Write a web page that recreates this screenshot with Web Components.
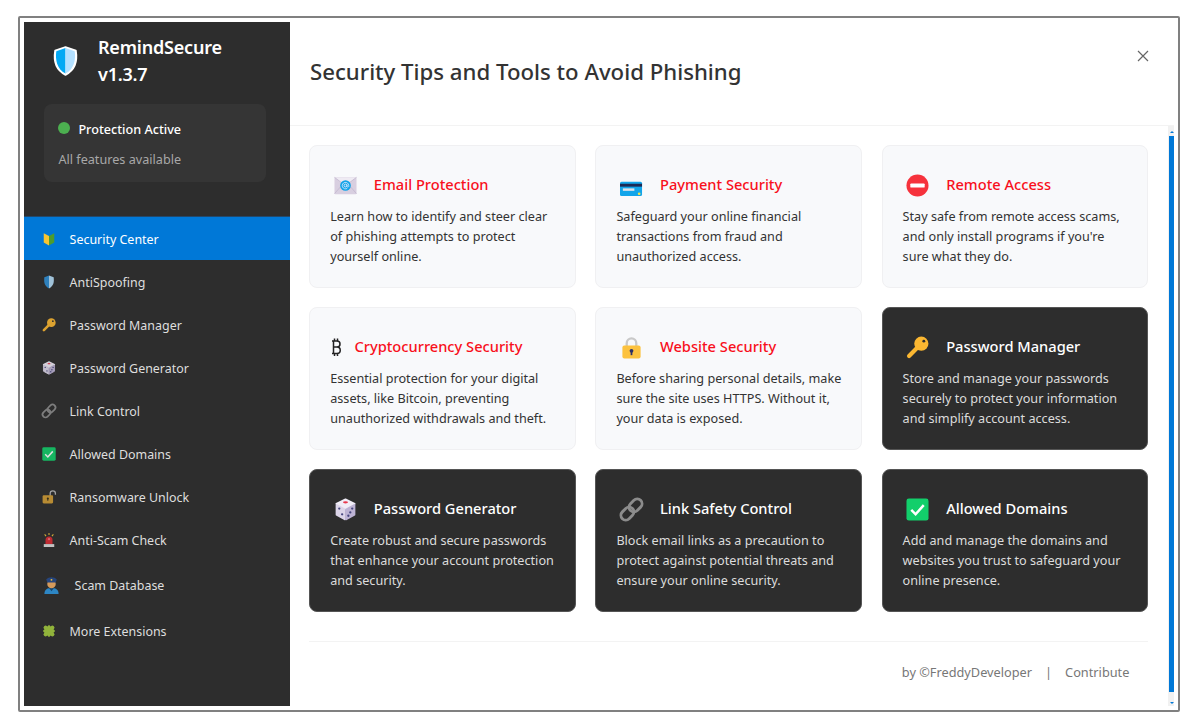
<!DOCTYPE html>
<html lang="en">
<head>
<meta charset="utf-8">
<title>RemindSecure</title>
<style>
  html, body { margin: 0; background: #fff; }
  body { font-family: "Noto Sans", "Open Sans", sans-serif; font-size: 12.65px; color: #333; }
</style>
</head>
<body>
<app-frame>
  <side-bar slot="side">
    <nav-item icon="beginner" active>Security Center</nav-item>
    <nav-item icon="shield">AntiSpoofing</nav-item>
    <nav-item icon="key">Password Manager</nav-item>
    <nav-item icon="dice">Password Generator</nav-item>
    <nav-item icon="link">Link Control</nav-item>
    <nav-item icon="check">Allowed Domains</nav-item>
    <nav-item icon="unlock">Ransomware Unlock</nav-item>
    <nav-item icon="siren">Anti-Scam Check</nav-item>
    <nav-item icon="police" tall>Scam Database</nav-item>
    <nav-item icon="puzzle" short>More Extensions</nav-item>
  </side-bar>
  <main-panel slot="main" heading="Security Tips and Tools to Avoid Phishing">
    <tip-card icon="mail" heading="Email Protection">Learn how to identify and steer clear of phishing attempts to protect yourself online.</tip-card>
    <tip-card icon="card" heading="Payment Security">Safeguard your online financial transactions from fraud and unauthorized access.</tip-card>
    <tip-card icon="noentry" heading="Remote Access">Stay safe from remote access scams, and only install programs if you're sure what they do.</tip-card>
    <tip-card icon="bitcoin" narrow heading="Cryptocurrency Security">Essential protection for your digital assets, like Bitcoin, preventing unauthorized withdrawals and theft.</tip-card>
    <tip-card icon="lock" heading="Website Security">Before sharing personal details, make sure the site uses HTTPS. Without it, your data is exposed.</tip-card>
    <tip-card icon="key" dark heading="Password Manager">Store and manage your passwords securely to protect your information and simplify account access.</tip-card>
    <tip-card icon="dice" dark heading="Password Generator">Create robust and secure passwords that enhance your account protection and security.</tip-card>
    <tip-card icon="link" dark heading="Link Safety Control">Block email links as a precaution to protect against potential threats and ensure your online security.</tip-card>
    <tip-card icon="check" dark heading="Allowed Domains">Add and manage the domains and websites you trust to safeguard your online presence.</tip-card>
  </main-panel>
</app-frame>

<script>
const ICONS = {
  logo: `<path d="M12 1 L22.4 4.5 C24 14 22 24 12 29 C2 24 0 14 1.6 4.5 Z" fill="#fff" stroke="#fff" stroke-width="1.6" stroke-linejoin="round"/>
    <path d="M12 2 L2.8 5.2 C1.6 14 3.4 23 12 27.6 Z" fill="#03a9f4"/>
    <path d="M12 2 L21.2 5.2 C22.4 14 20.6 23 12 27.6 Z" fill="#b3e0ff"/>`,
  beginner: `<path d="M3 2 L12 7 V23 L3 18 Z" fill="#f7c531"/><path d="M21 2 L12 7 V23 L21 18 Z" fill="#4d9c2c"/>`,
  shield: `<path d="M12 1 L4 4 C3 12 4 19 12 23 Z" fill="#2f8fd6"/><path d="M12 1 L20 4 C21 12 20 19 12 23 Z" fill="#b5dcf7"/>`,
  key: `<path d="M13 11 L3.2 20.8" stroke="#fbb731" stroke-width="4.4" stroke-linecap="round"/>
    <circle cx="16" cy="8" r="7.4" fill="#fbb731"/><circle cx="18.6" cy="5.4" r="1.5" fill="#2d2d2d"/>`,
  dice: `<path d="M12 1.5 L21.5 6 L12 11 L2.5 6 Z" fill="#f1edf7" stroke="#f1edf7" stroke-width="2" stroke-linejoin="round"/>
    <path d="M2.5 7 L11.5 12 V22.5 L2.5 17.5 Z" fill="#dcd5e8" stroke="#dcd5e8" stroke-width="1.6" stroke-linejoin="round"/>
    <path d="M21.5 7 L12.5 12 V22.5 L21.5 17.5 Z" fill="#bdb3d4" stroke="#bdb3d4" stroke-width="1.6" stroke-linejoin="round"/>
    <ellipse cx="12" cy="4.5" rx="2.6" ry="1.2" fill="#e8394d"/>
    <g fill="#46467e"><circle cx="5.5" cy="11" r="1.2"/><circle cx="8.5" cy="17" r="1.2"/><circle cx="15" cy="18.5" r="1.2"/><circle cx="17" cy="15" r="1.2"/><circle cx="19" cy="11" r="1.2"/></g>`,
  link: `<g transform="rotate(-45 12 12)" fill="none" stroke="#8c8c8c" stroke-width="3"><rect x="-1.5" y="7" width="15" height="10" rx="5"/><rect x="10.5" y="7" width="15" height="10" rx="5"/></g>`,
  check: `<rect x="0.5" y="0.5" width="23" height="23" rx="2.5" fill="#12cf6b"/><path d="M5.5 12.5 L10 17 L18.5 7.5" fill="none" stroke="#fff" stroke-width="2.6"/>`,
  unlock: `<path d="M14 12 V6 A4.5 4.5 0 0 1 23 6 V8" fill="none" stroke="#b9b9b9" stroke-width="2.2"/>
    <rect x="1" y="9" width="18" height="14" rx="2" fill="#d09c35"/><circle cx="10" cy="14.5" r="1.8" fill="#332c18"/><rect x="9.2" y="14.5" width="1.6" height="4" fill="#332c18"/>`,
  siren: `<path d="M6 19 V12 A6 6 0 0 1 18 12 V19 Z" fill="#d92b33"/><circle cx="12" cy="10.5" r="2" fill="#f5727a"/>
    <path d="M3 19 H21 V24 H3 Z" fill="#dcdcdc"/>
    <path d="M12 0 V3.5 M4.5 2.5 L7 5.5 M19.5 2.5 L17 5.5" stroke="#f2c53d" stroke-width="1.8"/>`,
  police: `<path d="M2 24 C2 17 6.5 15.5 12 15.5 C17.5 15.5 22 17 22 24 Z" fill="#2d86c4"/>
    <path d="M8.5 15.5 L12 20 L15.5 15.5 Z" fill="#16456e"/>
    <circle cx="12" cy="9.8" r="6" fill="#d49a5c"/>
    <path d="M4.5 3.5 C8 -0.5 16 -0.5 19.5 3.5 L17.8 7.6 H6.2 Z" fill="#26457c"/><circle cx="12" cy="4" r="1.3" fill="#f2c53d"/>`,
  puzzle: `<g transform="rotate(45 12 12)" fill="#a3cb3e">
      <rect x="4.5" y="4.5" width="15" height="15" rx="1"/>
      <circle cx="12" cy="3.8" r="3.6"/><circle cx="20.2" cy="12" r="3.6"/>
      <circle cx="3.8" cy="12" r="3.6"/><circle cx="12" cy="20.2" r="3.6"/>
    </g>`,
  mail: `<rect x="0.5" y="3" width="23" height="18" rx="1" fill="#d8cfe0"/>
    <path d="M0.5 3.5 L12 12 L23.5 3.5" fill="#efebf3" stroke="#bfb3cb" stroke-width="0.7"/>
    <path d="M0.5 20.5 L8 12 M23.5 20.5 L16 12" stroke="#bfb3cb" stroke-width="0.7"/>
    <circle cx="12" cy="12" r="5.6" fill="#11a4e8"/>
    <circle cx="12" cy="12" r="1.5" fill="none" stroke="#eef" stroke-width="0.9"/>
    <path d="M13.5 11 V13 A1 1 0 0 0 15.4 12 A3.4 3.4 0 1 0 13.8 15" fill="none" stroke="#eef" stroke-width="0.8"/>`,
  card: `<rect x="0" y="8" width="23" height="15" rx="1.6" fill="#12a5ea"/>
    <rect x="0" y="10.2" width="23" height="3" fill="#1c2a55"/>
    <rect x="3" y="15" width="12" height="2.6" fill="#dde3ea"/>
    <circle cx="20" cy="20.6" r="1.4" fill="#f7e54a"/>`,
  noentry: `<circle cx="12" cy="12" r="11.5" fill="#f6323c"/><rect x="4.5" y="9.8" width="15" height="4.4" rx="1" fill="#fff"/>`,
  lock: `<path d="M7 12 V7.5 A5 5 0 0 1 17 7.5 V12" fill="none" stroke="#c9c9c9" stroke-width="2.4"/>
    <rect x="2.5" y="10" width="19" height="13.5" rx="2" fill="#fcc23f"/>
    <circle cx="12" cy="15.5" r="2" fill="#2d2f66"/><rect x="11.1" y="15.5" width="1.8" height="4.5" fill="#2d2f66"/>`
}

class AppFrame extends HTMLElement {
  constructor () {
    super()
    this.shadow = this.attachShadow({ mode: 'open' })
  }

  connectedCallback () {
    this.shadow.innerHTML = /* html */`
      <style>
        :host {
          display: flex;
          box-sizing: border-box;
          width: 1162px;
          height: 696px;
          margin: 16px 0 0 18px;
          padding: 4px;
          border: 2px solid #808080;
          border-radius: 2px;
          background: #fff;
        }
        ::slotted([slot="side"]) { flex: none; width: 266px; }
        ::slotted([slot="main"]) { flex: 1; min-width: 0; }
      </style>
      <slot name="side"></slot>
      <slot name="main"></slot>
    `
  }
}

class AppIcon extends HTMLElement {
  constructor () {
    super()
    this.shadow = this.attachShadow({ mode: 'open' })
  }

  connectedCallback () {
    const name = this.getAttribute('name')
    const box = name === 'logo' ? '0 0 24 30' : '0 0 24 24'
    this.shadow.innerHTML = /* html */`
      <style>
        :host { display: block; line-height: 0; }
        svg { display: block; width: 100%; height: 100%; overflow: visible; }
      </style>
      <svg viewBox="${box}" xmlns="http://www.w3.org/2000/svg">${ICONS[name] || ''}</svg>
    `
  }
}

class SideBar extends HTMLElement {
  constructor () {
    super()
    this.shadow = this.attachShadow({ mode: 'open' })
  }

  connectedCallback () {
    this.shadow.innerHTML = /* html */`
      <style>
        :host { display: flex; flex-direction: column; background: #2d2d2d; color: #fff; }
        .brand { display: flex; align-items: center; gap: 20px; padding: 12px 0 0 29px; }
        app-icon { width: 25px; height: 30px; }
        h1 { margin: 0; font-size: 18px; line-height: 27px; font-weight: 600; letter-spacing: -0.2px; }
        .status {
          box-sizing: border-box;
          height: 78px;
          margin: 16px 24px 34px 20px;
          padding: 15px 14.4px 13px;
          border-radius: 8px;
          background: #353535;
        }
        .state { display: flex; align-items: center; gap: 8px; line-height: 20px; font-weight: 500; margin-bottom: 10px; }
        .dot { width: 12px; height: 12px; border-radius: 50%; background: #4caf50; position: relative; top: -1px; }
        .note { line-height: 20px; color: #a8a8a8; }
        nav { display: flex; flex-direction: column; border-top: 1px solid #23486b; }
      </style>
      <div class="brand">
        <app-icon name="logo"></app-icon>
        <h1>RemindSecure<br>v1.3.7</h1>
      </div>
      <div class="status">
        <div class="state"><span class="dot"></span>Protection Active</div>
        <div class="note">All features available</div>
      </div>
      <nav><slot></slot></nav>
    `
  }
}

class NavItem extends HTMLElement {
  constructor () {
    super()
    this.shadow = this.attachShadow({ mode: 'open' })
  }

  connectedCallback () {
    const icon = this.getAttribute('icon')
    this.shadow.innerHTML = /* html */`
      <style>
        :host {
          display: flex;
          align-items: center;
          gap: 13.6px;
          box-sizing: border-box;
          height: 43px;
          padding: 1px 0 0 18px;
          color: #dedede;
          font-size: 12.45px;
        }
        :host([active]) { background: #0078d7; color: #fff; }
        :host([tall]) { height: 47px; }
        :host([short]) { height: 45px; }
        app-icon { width: 14px; height: 14px; opacity: .85; }
        :host([active]) app-icon { opacity: 1; }
        .police { width: 17px; height: 17px; margin: 0 1px 0 1px; opacity: 1; }
      </style>
      <app-icon name="${icon}" class="${icon === 'police' ? 'police' : ''}"></app-icon>
      <slot></slot>
    `
  }
}

class MainPanel extends HTMLElement {
  constructor () {
    super()
    this.shadow = this.attachShadow({ mode: 'open' })
  }

  connectedCallback () {
    this.shadow.innerHTML = /* html */`
      <style>
        :host { display: flex; flex-direction: column; min-height: 0; }
        header {
          flex: none;
          display: flex;
          align-items: center;
          justify-content: space-between;
          box-sizing: border-box;
          height: 104px;
          padding: 0 25px 4px 20px;
          border-bottom: 1px solid #f3f3f3;
        }
        h2 { margin: 0; font-size: 22.2px; font-weight: 500; color: #333; }
        .close { width: 12px; height: 12px; position: relative; top: -15.5px; }
        .body { flex: 1; display: flex; min-height: 0; }
        .content { flex: 1; min-width: 0; padding: 19px 19.6px 0 19.2px; }
        .grid { display: grid; grid-template-columns: repeat(3, 1fr); gap: 19px 19.4px; }
        footer {
          display: flex;
          justify-content: flex-end;
          gap: 13px;
          margin-top: 29px;
          padding: 20px 19px 0 0;
          border-top: 1px solid #f3f3f3;
          font-size: 12.75px;
          line-height: 20px;
          color: #777;
        }
        .track { flex: none; display: flex; flex-direction: column; align-items: flex-end; width: 6px; height: 100%; background: #f1f1f1; }
        .up, .down { width: 0; height: 0; margin-right: .5px; border: 2px solid transparent; border-top-width: 0; border-bottom-width: 0; }
        .up { margin-top: 5px; border-bottom: 2px solid #0078d7; }
        .thumb { flex: none; width: 5px; height: 556px; margin: 3px 0 10px; background: #0078d7; }
        .down { border-top: 2px solid #0078d7; }
      </style>
      <header>
        <h2>${this.getAttribute('heading')}</h2>
        <svg class="close" viewBox="0 0 12 12"><path d="M1 1 L11 11 M11 1 L1 11" stroke="#666" stroke-width="1.2" fill="none"/></svg>
      </header>
      <div class="body">
        <div class="content">
          <div class="grid"><slot></slot></div>
          <footer><span>by ©FreddyDeveloper</span><span>|</span><span>Contribute</span></footer>
        </div>
        <div class="track"><div class="up"></div><div class="thumb"></div><div class="down"></div></div>
      </div>
    `
  }
}

class TipCard extends HTMLElement {
  constructor () {
    super()
    this.shadow = this.attachShadow({ mode: 'open' })
  }

  connectedCallback () {
    const icon = this.getAttribute('icon')
    const picture = icon === 'bitcoin'
      ? `<svg class="btc" viewBox="0 0 11 20"><path d="M2.5 4 V16.5 M1 4 H6 A3 3 0 0 1 6 10 H2.5 M6 10 A3.2 3.2 0 0 1 6 16.5 H1 M3.5 1.5 V4 M6.5 1.5 V4 M3.5 16.5 V19 M6.5 16.5 V19" fill="none" stroke="#222" stroke-width="1.5"/></svg>`
      : `<app-icon name="${icon}"></app-icon>`
    this.shadow.innerHTML = /* html */`
      <style>
        :host {
          display: block;
          box-sizing: border-box;
          height: 143px;
          padding: 20.8px 16px 20.8px 20px;
          border: 1px solid #f0f0f2;
          border-radius: 8px;
          background: #f8f9fb;
          color: #333;
        }
        :host([dark]) { background: #2d2d2d; border-color: #555; color: #dcdcdc; }
        .top { display: flex; align-items: center; gap: 13.6px; height: 35px; margin-bottom: 4.4px; }
        .pic { flex: none; display: flex; justify-content: center; width: 30px; position: relative; top: 1px; }
        :host([narrow]) .pic { width: 10.7px; justify-content: flex-start; }
        app-icon { width: 23px; height: 23px; flex: none; }
        .btc { width: 11px; height: 20px; flex: none; margin-left: 1px; }
        h3 { margin: 0; font-size: 14.65px; font-weight: 500; color: #f8101c; white-space: nowrap; }
        :host([dark]) h3 { color: #fff; }
        p { margin: 0; line-height: 20px; }
      </style>
      <div class="top">
        <div class="pic">${picture}</div>
        <h3>${this.getAttribute('heading')}</h3>
      </div>
      <p><slot></slot></p>
    `
  }
}

customElements.define('app-icon', AppIcon)
customElements.define('app-frame', AppFrame)
customElements.define('side-bar', SideBar)
customElements.define('nav-item', NavItem)
customElements.define('main-panel', MainPanel)
customElements.define('tip-card', TipCard)
</script>
</body>
</html>
